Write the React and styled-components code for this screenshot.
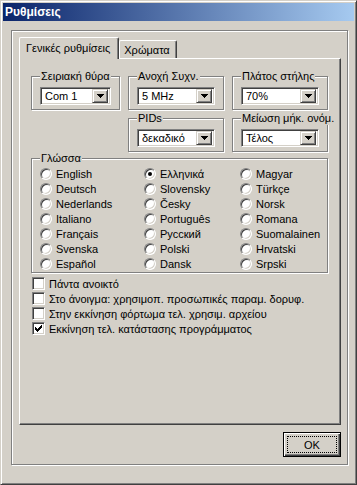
import styled, { createGlobalStyle } from 'styled-components';

const GlobalStyle = createGlobalStyle`
  html, body {
    margin: 0;
    padding: 0;
    background: #d4d0c8;
  }
  body {
    font-family: "Liberation Sans", Arial, sans-serif;
    font-size: 11px;
    color: #000;
  }
`;

const Window = styled.div`
  box-sizing: border-box;
  width: 357px;
  height: 485px;
  display: flex;
  flex-direction: column;
  background: #d4d0c8;
  border: 1px solid;
  border-color: #d4d0c8 #404040 #404040 #d4d0c8;
  box-shadow: inset 1px 1px #fff, inset -1px -1px #808080;
  padding: 2px;
`;

const TitleBar = styled.div`
  height: 18px;
  flex-shrink: 0;
  display: flex;
  align-items: center;
  padding-left: 2px;
  background: linear-gradient(to right, #0a246a, #a6caf0);
  color: #fff;
  font-weight: bold;
  font-size: 12px;
`;

const Frame = styled.div`
  flex: 1;
  display: flex;
  flex-direction: column;
  margin: 9px 6px 17px 8px;
  padding: 7px 6px 7px 7px;
  border: 1px solid #808080;
  box-shadow: inset 1px 1px #fff, 1px 1px #fff;
`;

const TabRow = styled.div`
  display: flex;
  align-items: flex-end;
  height: 21px;
  position: relative;
  z-index: 1;
  margin-bottom: -1px;
`;

const Tab = styled.div`
  box-sizing: border-box;
  display: flex;
  align-items: center;
  background: #d4d0c8;
  border-left: 1px solid #fff;
  border-top: 1px solid #fff;
  border-right: 1px solid #404040;
  box-shadow: inset -1px 0 #808080;
  border-radius: 2px 2px 0 0;
  height: ${(p) => (p.$active ? '22px' : '18px')};
  padding: ${(p) => (p.$active ? '0 8px 2px 6px' : '0 6px 0 4px')};
  margin-bottom: ${(p) => (p.$active ? '0' : '1px')};
`;

const Panel = styled.div`
  flex: 1;
  display: flex;
  flex-direction: column;
  padding: 11px 12px 0 11px;
  border-left: 1px solid #fff;
  border-top: 1px solid #fff;
  border-right: 1px solid #404040;
  border-bottom: 1px solid #404040;
  box-shadow: inset -1px -1px #808080;
`;

const TopGrid = styled.div`
  display: grid;
  grid-template-columns: 89px 96px 96px;
  column-gap: 8px;
  row-gap: 2px;
`;

const Group = styled.fieldset`
  margin: 0;
  min-width: 0;
  padding: 4px 8px 4px 8px;
  border: 1px solid #808080;
  box-shadow: inset 1px 1px #fff, 1px 1px #fff;
  grid-column: ${(p) => p.$col || 'auto'};
`;

const Legend = styled.legend`
  padding: 0 1px;
  font-size: 11px;
  line-height: 13px;
  background: #d4d0c8;
  white-space: nowrap;
`;

const Combo = styled.div`
  box-sizing: border-box;
  height: 18px;
  display: flex;
  align-items: center;
  background: #fff;
  border: 1px solid;
  border-color: #808080 #fff #fff #808080;
  box-shadow: inset 1px 1px #404040, inset -1px -1px #d4d0c8;
  padding: 2px 2px 2px 4px;
`;

const ComboText = styled.span`
  flex: 1;
  white-space: nowrap;
  overflow: hidden;
`;

const DropButton = styled.div`
  box-sizing: border-box;
  width: 16px;
  height: 14px;
  display: flex;
  align-items: center;
  justify-content: center;
  background: #d4d0c8;
  border: 1px solid;
  border-color: #d4d0c8 #404040 #404040 #d4d0c8;
  box-shadow: inset 1px 1px #fff, inset -1px -1px #808080;
`;

const LangGroup = styled(Group)`
  margin-top: 0;
  padding: 1px 8px 1px 8px;
`;

const RadioGrid = styled.div`
  display: grid;
  grid-template-columns: 104px 96px auto;
  grid-template-rows: repeat(7, 15px);
  grid-auto-flow: column;
`;

const Option = styled.label`
  display: flex;
  align-items: center;
  gap: 4px;
  white-space: nowrap;
`;

const RadioDot = styled.span`
  box-sizing: border-box;
  width: 12px;
  height: 12px;
  flex-shrink: 0;
  border-radius: 50%;
  background: #fff;
  border: 1px solid;
  border-color: #808080 #fff #fff #808080;
  box-shadow: inset 1px 1px #404040, inset -1px -1px #d4d0c8;
  display: flex;
  align-items: center;
  justify-content: center;

  &::after {
    content: '';
    width: 4px;
    height: 4px;
    border-radius: 50%;
    background: ${(p) => (p.$checked ? '#000' : 'transparent')};
  }
`;

const CheckList = styled.div`
  display: flex;
  flex-direction: column;
  margin-top: 3px;
  padding-left: 1px;
`;

const CheckRow = styled.label`
  display: flex;
  align-items: center;
  gap: 4px;
  height: 15px;
  white-space: nowrap;
`;

const CheckBox = styled.span`
  box-sizing: border-box;
  width: 13px;
  height: 13px;
  flex-shrink: 0;
  background: #fff;
  border: 1px solid;
  border-color: #808080 #fff #fff #808080;
  box-shadow: inset 1px 1px #404040, inset -1px -1px #d4d0c8;
  display: flex;
  align-items: center;
  justify-content: center;
`;

const ButtonRow = styled.div`
  display: flex;
  justify-content: flex-end;
  margin-top: 7px;
`;

const OkButton = styled.button`
  box-sizing: border-box;
  width: 58px;
  height: 25px;
  padding: 3px;
  font-family: "Liberation Sans", Arial, sans-serif;
  font-size: 11px;
  color: #000;
  background: #d4d0c8;
  border: 1px solid #000;
  box-shadow: inset 1px 1px #fff, inset -1px -1px #404040, inset -2px -2px #808080;
  display: flex;
`;

const FocusRect = styled.span`
  flex: 1;
  display: flex;
  align-items: center;
  justify-content: center;
  border: 1px dotted #000;
`;

function Arrow() {
  return (
    <svg width="7" height="4" viewBox="0 0 7 4" shapeRendering="crispEdges">
      <polygon points="0,0 7,0 3.5,4" fill="#000" />
    </svg>
  );
}

function Check() {
  return (
    <svg width="7" height="7" viewBox="0 0 7 7" shapeRendering="crispEdges">
      <polygon points="0,2 2,4 7,-1 7,2 2,7 0,5" fill="#000" />
    </svg>
  );
}

function Select({ value }) {
  return (
    <Combo>
      <ComboText>{value}</ComboText>
      <DropButton>
        <Arrow />
      </DropButton>
    </Combo>
  );
}

const languages = [
  'English', 'Deutsch', 'Nederlands', 'Italiano', 'Français', 'Svenska', 'Español',
  'Ελληνικά', 'Slovensky', 'Česky', 'Português', 'Русский', 'Polski', 'Dansk',
  'Magyar', 'Türkçe', 'Norsk', 'Romana', 'Suomalainen', 'Hrvatski', 'Srpski',
];

const checks = [
  { label: 'Πάντα ανοικτό', on: false },
  { label: 'Στο άνοιγμα: χρησιμοπ. προσωπικές παραμ. δορυφ.', on: false },
  { label: 'Στην εκκίνηση φόρτωμα τελ. χρησιμ. αρχείου', on: false },
  { label: 'Εκκίνηση τελ. κατάστασης προγράμματος', on: true },
];

export default function App() {
  return (
    <>
      <GlobalStyle />
      <Window>
        <TitleBar>Ρυθμίσεις</TitleBar>
        <Frame>
          <TabRow>
            <Tab $active>Γενικές ρυθμίσεις</Tab>
            <Tab>Χρώματα</Tab>
          </TabRow>
          <Panel>
            <TopGrid>
              <Group>
                <Legend>Σειριακή θύρα</Legend>
                <Select value="Com 1" />
              </Group>
              <Group>
                <Legend>Ανοχή Συχν.</Legend>
                <Select value="5 MHz" />
              </Group>
              <Group>
                <Legend>Πλάτος στήλης</Legend>
                <Select value="70%" />
              </Group>
              <Group $col="2">
                <Legend>PIDs</Legend>
                <Select value="δεκαδικό" />
              </Group>
              <Group>
                <Legend>Μείωση μήκ. ονόμ.</Legend>
                <Select value="Τέλος" />
              </Group>
            </TopGrid>
            <LangGroup>
              <Legend>Γλώσσα</Legend>
              <RadioGrid>
                {languages.map((lang) => (
                  <Option key={lang}>
                    <RadioDot $checked={lang === 'Ελληνικά'} />
                    {lang}
                  </Option>
                ))}
              </RadioGrid>
            </LangGroup>
            <CheckList>
              {checks.map((c) => (
                <CheckRow key={c.label}>
                  <CheckBox>{c.on && <Check />}</CheckBox>
                  {c.label}
                </CheckRow>
              ))}
            </CheckList>
          </Panel>
          <ButtonRow>
            <OkButton>
              <FocusRect>OK</FocusRect>
            </OkButton>
          </ButtonRow>
        </Frame>
      </Window>
    </>
  );
}
